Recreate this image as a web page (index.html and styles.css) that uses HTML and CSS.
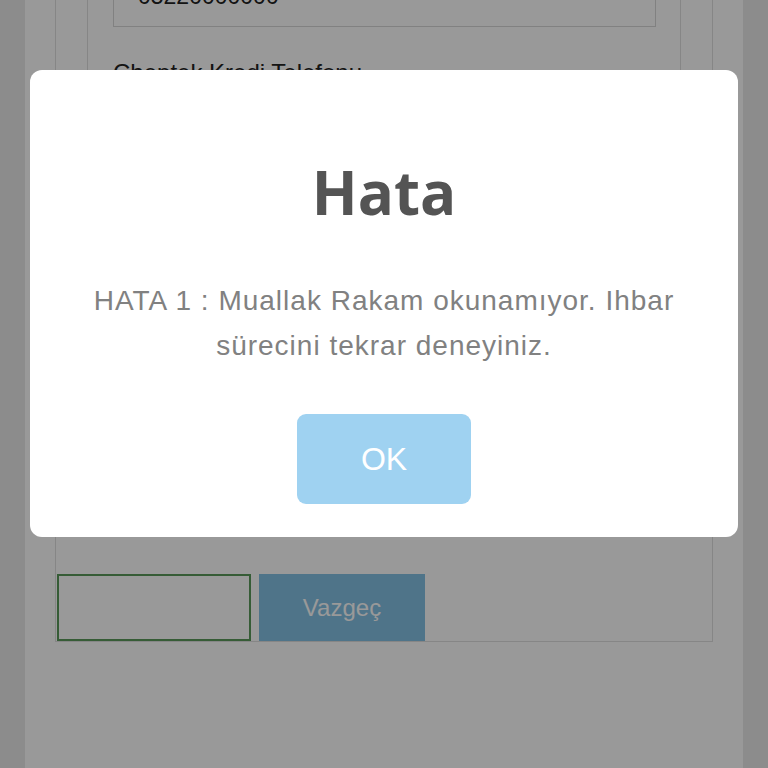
FILE: index.html
```html
<!DOCTYPE html>
<html lang="tr">
<head>
<meta charset="utf-8">
<title>Hata</title>
<link rel="stylesheet" href="styles.css">
</head>
<body>
<div class="page">
  <div class="side"></div>
  <main class="panel">
    <div class="container">
      <div class="card">
        <div class="field">05220000000</div>
        <div class="label">Cheptek Kredi Telefonu</div>
        <div class="field"></div>
        <div class="label">E-posta</div>
        <div class="field"></div>
        <div class="label">Adres</div>
        <div class="field"></div>
      </div>
      <div class="actions">
        <button class="save" type="button"></button>
        <button class="cancel" type="button">Vazgeç</button>
      </div>
    </div>
  </main>
  <div class="side"></div>
</div>
<div class="overlay">
  <div class="modal">
    <h2 class="title">Hata</h2>
    <p class="message">HATA 1 : Muallak Rakam okunamıyor. Ihbar<br>sürecini tekrar deneyiniz.</p>
    <button class="ok" type="button">OK</button>
  </div>
</div>
</body>
</html>
```
FILE: styles.css
```css
html, body {
  margin: 0;
  padding: 0;
  height: 100%;
  overflow: hidden;
}
body {
  font-family: "Liberation Sans", Arial, sans-serif;
  background: #ffffff;
}
.page {
  display: flex;
  height: 768px;
}
.side {
  width: 25px;
  background: #e9e9e9;
}
.panel {
  flex: 1;
  background: #ffffff;
  padding: 0 30px;
}
.container {
  margin-top: -43px;
  border: 1px solid #e0e0e0;
  border-top: none;
}
.card {
  margin: 0 31px;
  padding: 0 24px 40px 25px;
  border: 1px solid #e0e0e0;
  border-top: none;
}
.field {
  height: 70px;
  border: 1px solid #d8d8d8;
  box-sizing: border-box;
  margin-top: 10px;
  padding: 26px 0 0 24px;
  font-size: 23px;
  line-height: 24px;
  color: #222;
}
.card .field:first-child {
  margin-top: 0;
}
.label {
  margin-top: 32px;
  font-size: 24px;
  line-height: 28px;
  color: #222;
}
.actions {
  display: flex;
  gap: 8px;
  margin-top: 86px;
  padding-left: 1px;
  height: 67px;
}
.save {
  width: 194px;
  height: 67px;
  border: 2px solid #5a9a5a;
  background: #ffffff;
  box-sizing: border-box;
}
.cancel {
  width: 166px;
  height: 67px;
  border: none;
  background: #84c1e4;
  color: #ffffff;
  font-family: "Liberation Sans", Arial, sans-serif;
  font-size: 24px;
}
.overlay {
  position: fixed;
  inset: 0;
  background: rgba(0, 0, 0, 0.4);
}
.modal {
  position: absolute;
  left: 30px;
  top: 70px;
  width: 708px;
  height: 467px;
  box-sizing: border-box;
  background: #ffffff;
  border-radius: 12px;
  padding-top: 87px;
  display: flex;
  flex-direction: column;
  align-items: center;
}
.title {
  margin: 0;
  font-family: "Open Sans", sans-serif;
  font-weight: 700;
  font-size: 60px;
  line-height: 70px;
  color: #545454;
}
.message {
  margin: 51px 0 0;
  text-align: center;
  font-family: "Liberation Sans", Arial, sans-serif;
  font-weight: 400;
  font-size: 28px;
  letter-spacing: 1px;
  line-height: 45px;
  color: #818181;
}
.ok {
  margin-top: 46px;
  width: 174px;
  height: 90px;
  border: none;
  border-radius: 9px;
  background: #9fd2f1;
  color: #ffffff;
  font-family: "Liberation Sans", Arial, sans-serif;
  font-size: 32px;
  font-weight: 400;
}
```
